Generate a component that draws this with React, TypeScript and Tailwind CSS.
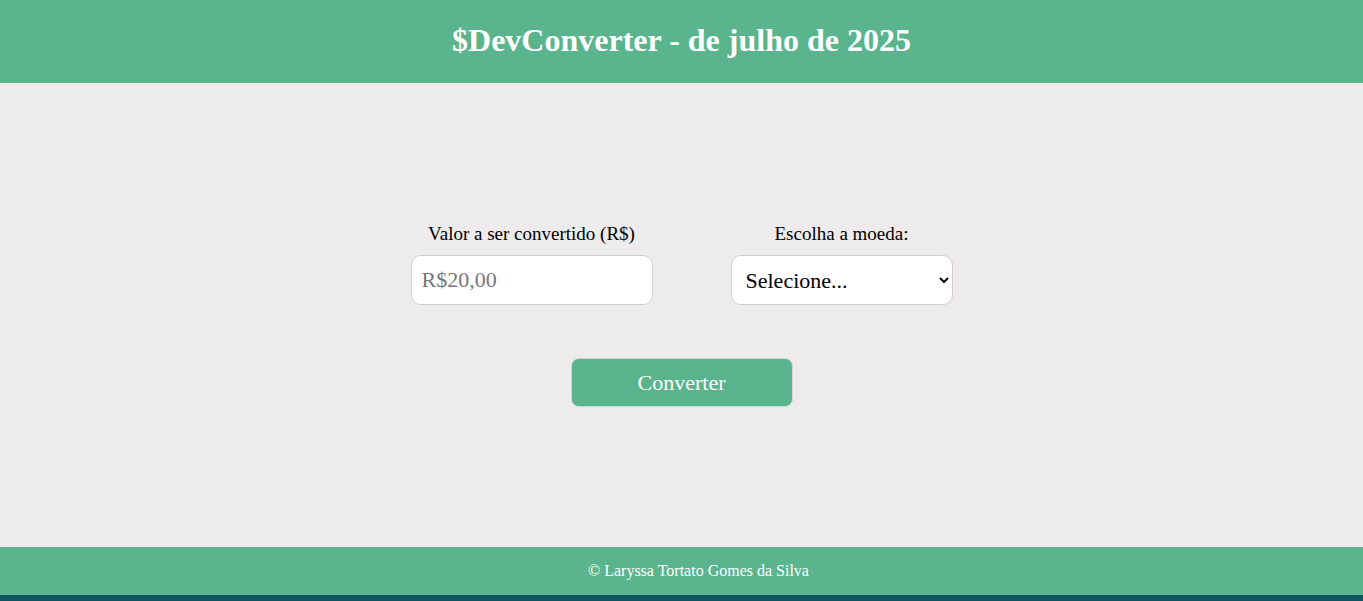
import React, { useState } from "react";

const serif = { fontFamily: '"Liberation Serif", "Times New Roman", serif' };

const App: React.FC = () => {
  const [valor, setValor] = useState("");
  const [moeda, setMoeda] = useState("");

  return (
    <div className="flex min-h-[601px] flex-col bg-[#edebec]" style={serif}>
      <header className="flex h-[83px] items-center justify-center bg-[#5ab48e] pb-[3px]">
        <h1 className="text-[32px] font-bold text-white">$DevConverter - de julho de 2025</h1>
      </header>

      <main className="flex flex-1 flex-col items-center justify-center">
        <div className="flex items-end gap-[78px]">
          <div className="flex flex-col items-center gap-[10px]">
            <label className="text-[19px] leading-[22px] text-black">Valor a ser convertido (R$)</label>
            <input
              value={valor}
              onChange={(e) => setValor(e.target.value)}
              placeholder="R$20,00"
              className="h-[50px] w-[242px] rounded-[10px] border border-[#cfcfcf] bg-white px-[10px] text-[22px] text-black outline-none placeholder:text-[#777]"
            />
          </div>
          <div className="flex flex-col items-center gap-[10px]">
            <label className="text-[19px] leading-[22px] text-black">Escolha a moeda:</label>
            <select
              value={moeda}
              onChange={(e) => setMoeda(e.target.value)}
              className="h-[50px] w-[222px] rounded-[10px] border border-[#cfcfcf] bg-white px-[10px] text-[22px] text-black outline-none"
            >
              <option value="">Selecione...</option>
              <option value="USD">Dólar</option>
              <option value="EUR">Euro</option>
            </select>
          </div>
        </div>

        <button className="mt-[53px] h-[49px] w-[222px] rounded-[8px] border border-[#d4d4d4] bg-[#5ab48e] text-[22px] text-white">
          Converter
        </button>
      </main>

      <footer className="flex h-[48px] items-center justify-center bg-[#5ab48e] pl-[34px]">
        <p className="text-[16px] text-white">© Laryssa Tortato Gomes da Silva</p>
      </footer>
      <div className="h-[6px] bg-[#0e5560]" />
    </div>
  );
};

export default App;
